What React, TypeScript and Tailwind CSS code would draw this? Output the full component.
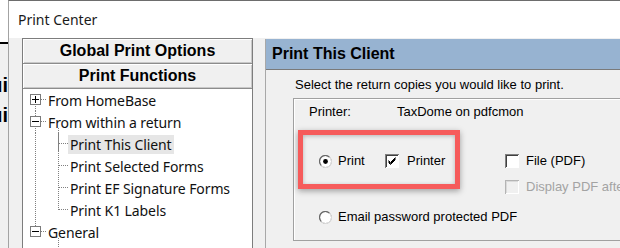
import React from 'react';

type TreeRow = {
  label: string;
  level: 0 | 1;
  box?: '+' | '-';
  up?: boolean;
  down?: boolean;
  last?: boolean;
  stub?: boolean;
  selected?: boolean;
};

const treeRows: TreeRow[] = [
  { label: 'From HomeBase', level: 0, box: '+', down: true },
  { label: 'From within a return', level: 0, box: '-', up: true, down: true, stub: true },
  { label: 'Print This Client', level: 1, selected: true },
  { label: 'Print Selected Forms', level: 1 },
  { label: 'Print EF Signature Forms', level: 1 },
  { label: 'Print K1 Labels', level: 1, last: true },
  { label: 'General', level: 0, box: '-', up: true, stub: true },
];

const dot = { stroke: '#808080', strokeWidth: 1, strokeDasharray: '1 1', shapeRendering: 'crispEdges' as const };

function Connector({ row }: { row: TreeRow }) {
  if (row.level === 0) {
    return (
      <svg width="24" height="22" className="shrink-0 overflow-visible">
        {row.up && <line x1="11.5" y1="0" x2="11.5" y2="5" {...dot} />}
        {row.down && <line x1="11.5" y1="17" x2="11.5" y2="22" {...dot} />}
        {row.stub && <line x1="34.5" y1="17" x2="34.5" y2="40" {...dot} />}
        <line x1="17" y1="10.5" x2="23" y2="10.5" {...dot} />
        <rect x="6.5" y="5.5" width="10" height="10" fill="#fff" stroke="#7a7a7a" shapeRendering="crispEdges" />
        <line x1="8" y1="10.5" x2="15" y2="10.5" stroke="#000" shapeRendering="crispEdges" />
        {row.box === '+' && <line x1="11.5" y1="7" x2="11.5" y2="14" stroke="#000" shapeRendering="crispEdges" />}
      </svg>
    );
  }
  return (
    <svg width="44" height="22" className="shrink-0">
      <line x1="11.5" y1="0" x2="11.5" y2="22" {...dot} />
      <line x1="34.5" y1="0" x2="34.5" y2={row.last ? 11 : 22} {...dot} />
      <line x1="35" y1="10.5" x2="44" y2="10.5" {...dot} />
    </svg>
  );
}

function Radio({ checked }: { checked?: boolean }) {
  return (
    <svg width="13" height="13" className="shrink-0">
      <circle cx="6.5" cy="6.5" r="6" fill="#fff" stroke="#a0a0a0" />
      <path d="M2.2 10.3 A5.2 5.2 0 0 1 10.3 2.2" fill="none" stroke="#696969" strokeWidth="1.2" />
      <path d="M10.8 2.7 A5.2 5.2 0 0 1 2.7 10.8" fill="none" stroke="#e3e3e3" strokeWidth="1" />
      {checked && <circle cx="6.5" cy="6.5" r="2.4" fill="#000" />}
    </svg>
  );
}

function Check({ checked, disabled }: { checked?: boolean; disabled?: boolean }) {
  return (
    <svg width="14" height="14" className="shrink-0" shapeRendering="crispEdges">
      <rect x="0" y="0" width="14" height="14" fill={disabled ? '#f0f0f0' : '#fff'} />
      <path d="M0.5 13.5 V0.5 H13.5" fill="none" stroke={disabled ? '#b4b4b4' : '#808080'} />
      <path d="M1.5 12.5 V1.5 H12.5" fill="none" stroke={disabled ? '#dadada' : '#404040'} />
      <path d="M0.5 13.5 H13.5 V0.5" fill="none" stroke="#fff" />
      {checked && (
        <path d="M3.5 6.5 L5.5 8.5 L10.5 3.5 M3.5 7.5 L5.5 9.5 L10.5 4.5 M3.5 8.5 L5.5 10.5 L10.5 5.5" fill="none" stroke="#000" shapeRendering="auto" />
      )}
    </svg>
  );
}

export default function App() {
  return (
    <div className="flex h-[248px] w-[620px] overflow-hidden bg-white font-['Liberation_Sans',Arial,sans-serif] text-black">
      {/* Window behind, only a sliver shows */}
      <div className="flex w-[8px] shrink-0 flex-col overflow-hidden">
        <div className="h-[42px] bg-white" />
        <div className="h-[2px] bg-black" />
        <div className="flex flex-1 flex-col items-end bg-[#f0f0f0] pt-[26px] text-[20px] font-bold leading-[30px]">
          <span className="whitespace-nowrap">ui</span>
          <span className="whitespace-nowrap">ui</span>
        </div>
      </div>

      {/* Print Center window */}
      <div className="flex w-[720px] shrink-0 flex-col border-l border-t border-l-[#a3a3a3] border-t-[#6d6d6d]">
        <div className="flex h-[37px] shrink-0 items-center bg-white pl-[9px] font-['Noto_Sans',sans-serif] text-[14px] text-[#1a1a1a]">
          Print Center
        </div>

        <div className="flex flex-1 bg-[#f0f0f0]">
          {/* Left navigation */}
          <div className="ml-[13px] flex w-[231px] shrink-0 flex-col border border-b-0 border-[#7d7d7d]">
            <div className="flex h-[25px] items-center justify-center border-b border-[#8c8c8c] bg-[#f0f0f0] text-[16px] font-bold shadow-[inset_1px_1px_0_#fff,inset_-1px_-1px_0_#c8c8c8]">
              Global Print Options
            </div>
            <div className="flex h-[25px] items-center justify-center border-b border-[#8c8c8c] bg-[#f0f0f0] text-[16px] font-bold shadow-[inset_1px_1px_0_#fff,inset_-1px_-1px_0_#c8c8c8]">
              Print Functions
            </div>
            <div className="flex-1 bg-white pl-[1px] font-['Noto_Sans',sans-serif] text-[14px] tracking-[-0.1px] text-[#111]">
              {treeRows.map((row) => (
                <div key={row.label} className="flex h-[22px] items-center">
                  <Connector row={row} />
                  <span
                    className={
                      row.selected
                        ? 'flex h-[19px] items-center bg-[#e6e6e6] px-[2px]'
                        : row.level === 1
                          ? 'px-[2px]'
                          : ''
                    }
                  >
                    {row.label}
                  </span>
                </div>
              ))}
            </div>
          </div>

          {/* Right panel */}
          <div className="ml-[12px] mt-[1px] flex flex-1 flex-col border-l border-[#a8a8a8]">
            <div className="flex h-[30px] shrink-0 items-center bg-[#97b3d1] pl-[6px] text-[16px] font-bold">
              Print This Client
            </div>
            <div className="flex flex-1 flex-col border-t border-[#7a7a7a] text-[13px]">
              <div className="ml-[29px] mt-[7px] h-[16px] leading-[16px]">
                Select the return copies you would like to print.
              </div>
              <div className="relative ml-[27px] mt-[5px] flex flex-col border border-r-0 border-[#a0a0a0] pb-[15px] shadow-[inset_1px_1px_0_#fff]">
                <div className="mt-[5px] flex h-[16px] items-center pl-[15px]">
                  <span className="w-[88px]">Printer:</span>
                  <span>TaxDome on pdfcmon</span>
                </div>

                <div className="mt-[33px] flex h-[16px] items-center pl-[25px]">
                  <div className="flex w-[66px] items-center gap-[6px]">
                    <Radio checked />
                    <span>Print</span>
                  </div>
                  <div className="flex w-[120px] items-center gap-[8px]">
                    <Check checked />
                    <span>Printer</span>
                  </div>
                  <div className="flex items-center gap-[7px]">
                    <Check />
                    <span>File (PDF)</span>
                  </div>
                </div>

                <div className="mt-[10px] flex h-[16px] items-center gap-[7px] pl-[211px] text-[#a3a3a3]">
                  <Check disabled />
                  <span className="whitespace-nowrap">Display PDF after printing</span>
                </div>

                <div className="mt-[14px] flex h-[16px] items-center gap-[6px] pl-[25px]">
                  <Radio />
                  <span>Email password protected PDF</span>
                </div>

                {/* Annotation highlight */}
                <div className="absolute left-[4px] top-[31px] h-[59px] w-[162px] border-[5px] border-[#f65b5b] shadow-[0_2px_6px_rgba(0,0,0,0.35),inset_0_1px_4px_rgba(0,0,0,0.25)]" />
              </div>
            </div>
          </div>
        </div>
      </div>
    </div>
  );
}
